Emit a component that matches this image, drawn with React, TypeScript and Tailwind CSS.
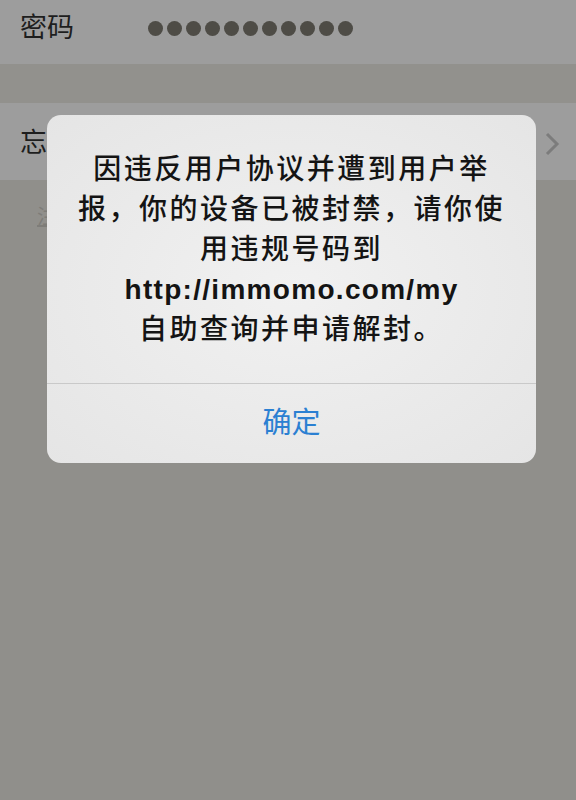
const CJK = "font-['Helvetica_Neue','Liberation_Sans','Noto_Sans_CJK_SC',sans-serif]";

function Row({ children, className }: { children: React.ReactNode; className?: string }) {
  return <div className={`flex items-center px-5 ${className ?? ""}`}>{children}</div>;
}

export default function App() {
  return (
    <div className={`relative h-[800px] w-[576px] overflow-hidden bg-[#908f8b] ${CJK}`}>
      {/* login form underneath */}
      <Row className="h-[64px] bg-[#9d9d9d] pb-2">
        <span className="w-[128px] text-[27px] leading-none text-[#1e1e1e]">密码</span>
        <div className="flex gap-[4px]">
          {Array.from({ length: 11 }).map((_, i) => (
            <span key={i} className="h-[15px] w-[15px] rounded-full bg-[#4e4c46]" />
          ))}
        </div>
      </Row>
      <div className="h-[39px] bg-[#92918d]" />
      <Row className="h-[77px] justify-between bg-[#9d9d9d] pt-1">
        <span className="text-[27px] leading-none text-[#1e1e1e]">忘记密码</span>
        <svg width="16" height="26" viewBox="0 0 16 26" className="mr-[-4px]">
          <path d="M3 3 L13 13 L3 23" fill="none" stroke="#7c7c7c" strokeWidth="3" />
        </svg>
      </Row>
      <div className="px-[37px] pt-[22px]">
        <span className="text-[20px] text-[#7e7d79] underline">注册新账号</span>
      </div>

      {/* alert */}
      <div className="absolute left-[47px] top-[115px] flex h-[348px] w-[489px] flex-col overflow-hidden rounded-[14px] bg-[radial-gradient(ellipse_at_center,#f1f1f1,#e5e5e5)]">
        <div className="flex h-[268px] justify-center px-[22px] pt-[35px]">
          <p className="text-center text-[28px] leading-[40px] tracking-[2.5px] text-[#141414] [font-weight:500]">
            因违反用户协议并遭到用户举报，你的设备已被封禁，请你使用违规号码到
            <br />
            <span className="font-bold tracking-[1.3px]">http://immomo.com/my</span>
            <br />
            自助查询并申请解封。
          </p>
        </div>
        <div className="h-px bg-[#c9c9c9]" />
        <div className="flex flex-1 items-center justify-center">
          <span className="text-[29px] leading-none text-[#2b80d2]">确定</span>
        </div>
      </div>
    </div>
  );
}
